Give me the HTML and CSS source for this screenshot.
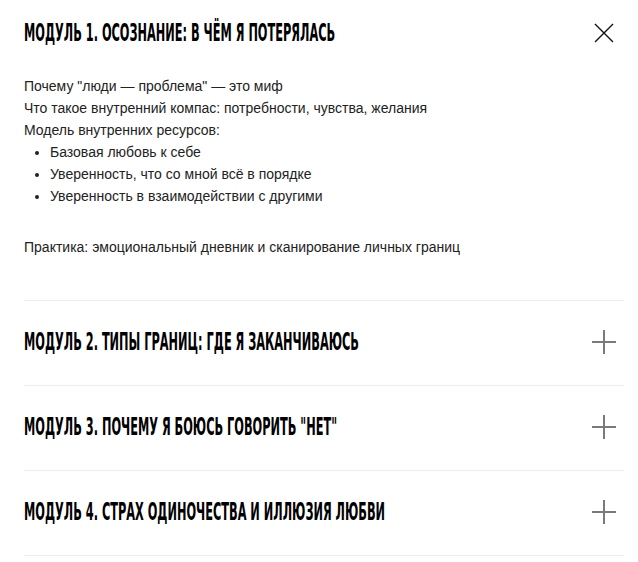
FILE: index.html
```html
<!DOCTYPE html>
<html lang="ru">
<head>
<meta charset="utf-8">
<title>Модули</title>
<link rel="stylesheet" href="styles.css">
</head>
<body>
<div class="accordion">
  <div class="item item-open">
    <div class="head head-first">
      <h3 class="title"><span class="title-text">МОДУЛЬ 1. ОСОЗНАНИЕ: В ЧЁМ Я ПОТЕРЯЛАСЬ</span></h3>
      <span class="toggle">
        <svg width="24" height="24" viewBox="0 0 24 24"><path d="M3 3 L21 21 M21 3 L3 21" stroke="#111" stroke-width="1.4" fill="none"/></svg>
      </span>
    </div>
    <div class="body">
      <div class="line">Почему "люди — проблема" — это миф</div>
      <div class="line">Что такое внутренний компас: потребности, чувства, желания</div>
      <div class="line">Модель внутренних ресурсов:</div>
      <ul class="list">
        <li>Базовая любовь к себе</li>
        <li>Уверенность, что со мной всё в порядке</li>
        <li>Уверенность в взаимодействии с другими</li>
      </ul>
      <div class="line practice">Практика: эмоциональный дневник и сканирование личных границ</div>
    </div>
  </div>
  <div class="item">
    <div class="head">
      <h3 class="title"><span class="title-text">МОДУЛЬ 2. ТИПЫ ГРАНИЦ: ГДЕ Я ЗАКАНЧИВАЮСЬ</span></h3>
      <span class="toggle plus"><svg width="24" height="24" viewBox="0 0 24 24"><path d="M12 0 V24 M0 12 H24" stroke="#7a7a7a" stroke-width="2" fill="none"/></svg></span>
    </div>
  </div>
  <div class="item">
    <div class="head">
      <h3 class="title"><span class="title-text">МОДУЛЬ 3. ПОЧЕМУ Я БОЮСЬ ГОВОРИТЬ "НЕТ"</span></h3>
      <span class="toggle plus"><svg width="24" height="24" viewBox="0 0 24 24"><path d="M12 0 V24 M0 12 H24" stroke="#7a7a7a" stroke-width="2" fill="none"/></svg></span>
    </div>
  </div>
  <div class="item">
    <div class="head">
      <h3 class="title"><span class="title-text">МОДУЛЬ 4. СТРАХ ОДИНОЧЕСТВА И ИЛЛЮЗИЯ ЛЮБВИ</span></h3>
      <span class="toggle plus"><svg width="24" height="24" viewBox="0 0 24 24"><path d="M12 0 V24 M0 12 H24" stroke="#7a7a7a" stroke-width="2" fill="none"/></svg></span>
    </div>
  </div>
</div>
</body>
</html>
```
FILE: styles.css
```css
html, body {
  margin: 0;
  padding: 0;
  background: #fff;
}
body {
  font-family: "Liberation Sans", Arial, sans-serif;
  color: #222;
}
.accordion {
  padding: 0 14px 0 24px;
}
.item {
  border-bottom: 1px solid #ececec;
}
.head {
  display: flex;
  align-items: center;
  justify-content: space-between;
  padding: 29px 0 31px;
}
.head-first {
  padding: 21px 0 30px;
}
.title {
  margin: 0;
  font-family: "DejaVu Sans Condensed", "DejaVu Sans", sans-serif;
  font-weight: 700;
  font-size: 18px;
  line-height: 24px;
  color: #000;
  white-space: nowrap;
  flex: 1;
  min-width: 0;
}
.title-text {
  display: inline-block;
  transform: scale(0.7, 1.333);
  transform-origin: left center;
}
.toggle {
  width: 24px;
  height: 24px;
  margin-right: 8px;
  display: flex;
  align-items: center;
  justify-content: center;
}
.toggle svg {
  display: block;
}
.body {
  font-size: 14px;
  line-height: 22px;
  padding: 0 0 42px;
}
.list {
  margin: 0;
  padding-left: 26px;
}
.practice {
  margin-top: 29px;
}
```
